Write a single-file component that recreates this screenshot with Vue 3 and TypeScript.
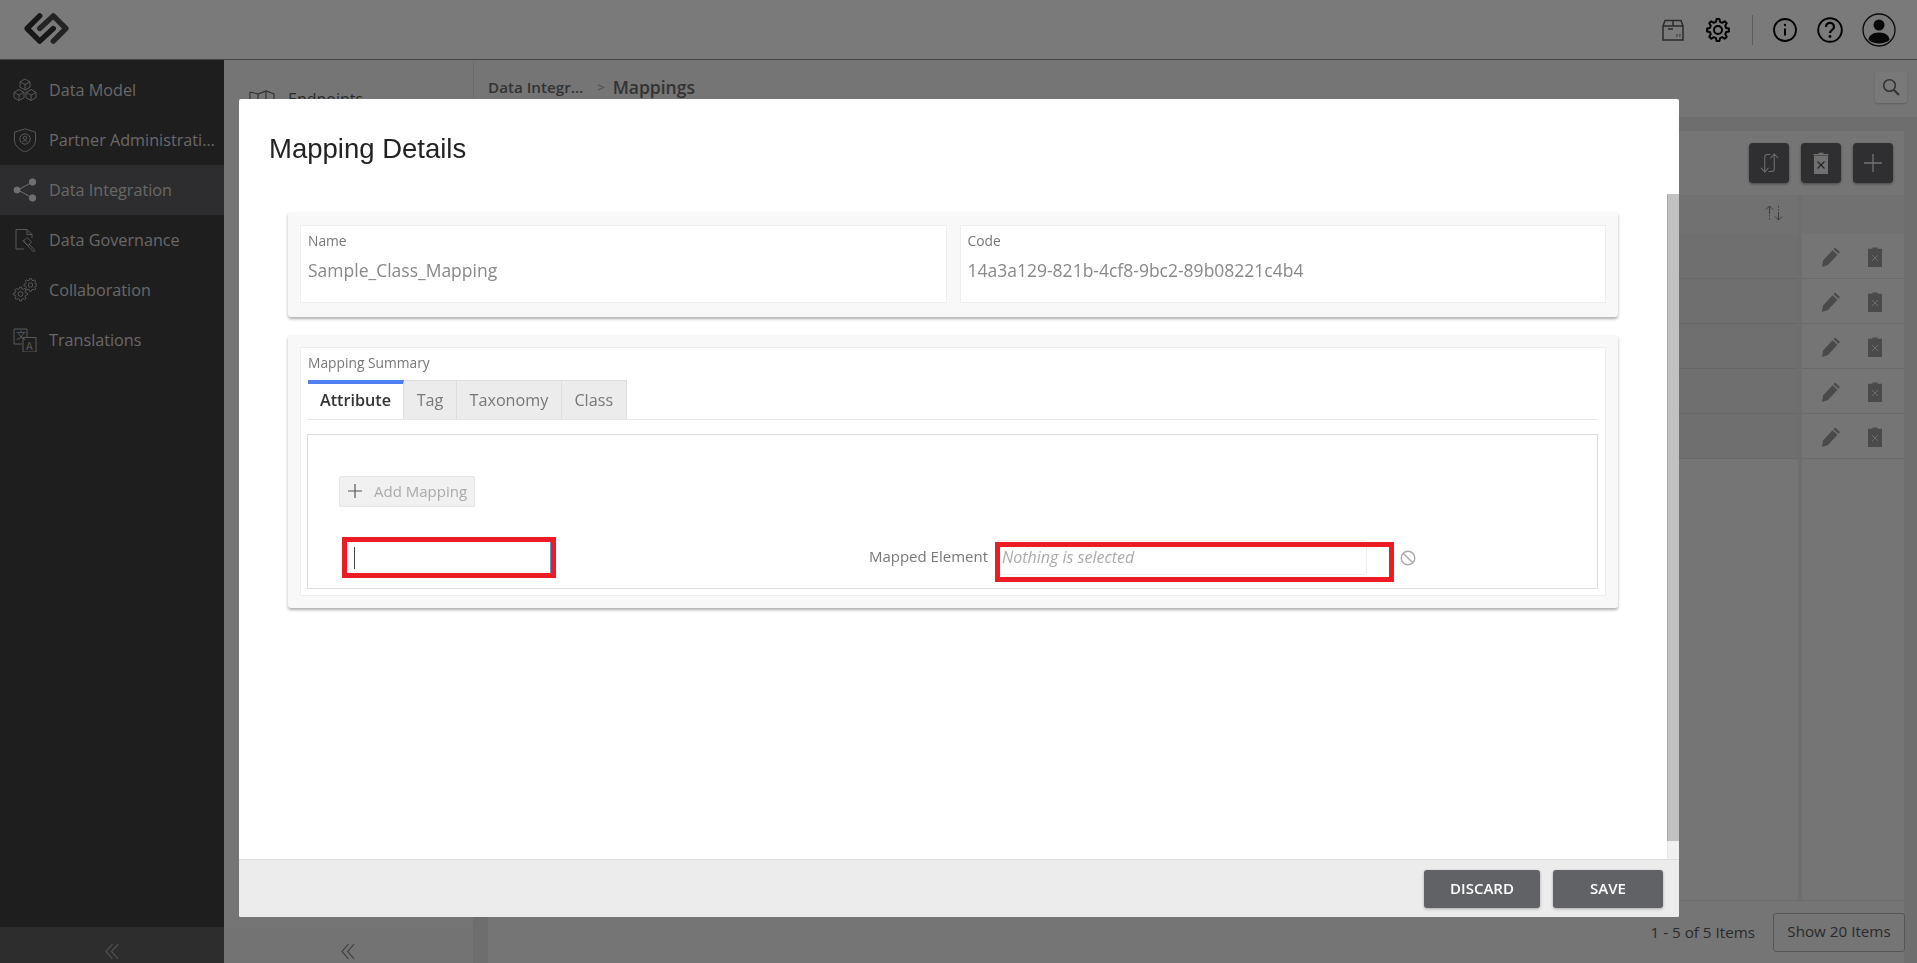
<script setup lang="ts">
import { ref } from 'vue'

// builds a toothed wheel outline for the gear icons
function gear(cx: number, cy: number, r: number, teeth = 8): string {
  const inner = r * 0.76
  const step = (Math.PI * 2) / teeth
  let d = ''
  for (let i = 0; i < teeth; i++) {
    const a = i * step - Math.PI / 2
    const pts: [number, number][] = [
      [inner, a - step * 0.32],
      [r, a - step * 0.17],
      [r, a + step * 0.17],
      [inner, a + step * 0.32],
    ]
    for (const [rad, ang] of pts) {
      d += `${d ? 'L' : 'M'}${(cx + rad * Math.cos(ang)).toFixed(2)} ${(cy + rad * Math.sin(ang)).toFixed(2)}`
    }
  }
  return d + 'Z'
}

function circle(cx: number, cy: number, r: number): string {
  return `M${cx - r} ${cy}a${r} ${r} 0 1 0 ${r * 2} 0a${r} ${r} 0 1 0 ${-r * 2} 0Z`
}

interface NavItem {
  label: string
  active?: boolean
  solid?: boolean
  paths: string[]
  marks?: { x: number; y: number; size: number; t: string }[]
}

const navItems: NavItem[] = [
  {
    label: 'Data Model',
    paths: [
      'M12 1l5 2.8v5.4L12 12 7 9.200V3.800z', 'M7 3.800l5 2.800 5-2.800', 'M12 6.600V12',
      'M6 11.500l5 2.800v5.400L6 22.500 1 19.700v-5.400z', 'M1 14.300l5 2.800 5-2.800', 'M6 17.100v5.400',
      'M18 11.500l5 2.800v5.400l-5 2.800-5-2.800v-5.400z', 'M13 14.300l5 2.800 5-2.800', 'M18 17.100v5.400',
    ],
  },
  {
    label: 'Partner Administration',
    paths: [
      'M12 .8l10.500 3.400v8C22.500 18 17 22 12 24 7 22 1.500 18 1.500 12.200v-8z',
      circle(12, 11, 5.200),
      circle(12, 9.800, 1.700),
      'M9.300 14.200c.5-2 4.900-2 5.400 0',
    ],
  },
  {
    label: 'Data Integration',
    active: true,
    solid: true,
    paths: [circle(4, 12, 3), circle(19.500, 4, 3.200), circle(19.500, 20, 3.200), 'M5 12L19.500 4M5 12l14.500 8'],
  },
  {
    label: 'Data Governance',
    paths: [
      'M11 21H3V1.500h11l5 5V10', 'M14 1.500v5h5',
      'M14 9.500l4.500 4.500-3.500 3.500-4.500-4.500z', 'M16 16l6 6.500-1.500 1.300-6-6.300', 'M9.500 12.500l5.500 5.500',
    ],
  },
  {
    label: 'Collaboration',
    paths: [gear(7.500, 16, 7), circle(7.500, 16, 2.400), gear(17.500, 7, 6.500), circle(17.500, 7, 2.200)],
  },
  {
    label: 'Translations',
    paths: ['M1 11V1h13v8', 'M1 11v5h8', 'M10 9.500h13V24H10z'],
    marks: [
      { x: 3, y: 11, size: 10, t: '文' },
      { x: 13, y: 21.500, size: 11, t: 'A' },
    ],
  },
]

const tabs = ['Attribute', 'Tag', 'Taxonomy', 'Class']
const activeTab = ref('Attribute')
const rows = [1, 2, 3, 4, 5]
const bigGear = gear(12, 12, 11, 8)
</script>

<template>
  <div class="page">
    <header class="topbar">
      <svg class="logo" viewBox="0 0 48 34" width="47" height="33">
        <path d="M17 4L4 17l13 13 14-13" fill="none" stroke="#2e2e2e" stroke-width="5.500" stroke-linejoin="round" stroke-linecap="round" />
        <path d="M17 17L31 4l13 13-13 13" fill="none" stroke="#484848" stroke-width="5.500" stroke-linejoin="round" stroke-linecap="round" />
      </svg>
      <div class="top-icons">
        <svg class="ic-box" viewBox="0 0 22 22" width="22" height="22" fill="none" stroke="#555" stroke-width="1.500">
          <path d="M1 7l2-5.500h16L21 7v14H1z" />
          <path d="M1 7h20M11 1.500V7M6 10h5" />
          <path d="M14 17h1.500M17 17h1.500M15 15v1M18 15v1" stroke-width="1" />
        </svg>
        <svg class="ic-gear" viewBox="0 0 24 24" width="24" height="24" fill="none" stroke="#000" stroke-width="2" stroke-linejoin="round">
          <path :d="bigGear" />
          <circle cx="12" cy="12" r="4" />
        </svg>
        <span class="top-divider"></span>
        <svg class="ic-info" viewBox="0 0 24 24" width="24" height="24" fill="none" stroke="#000" stroke-width="1.800">
          <circle cx="12" cy="12" r="11" />
          <path d="M12 10.500v7" stroke-width="2" />
          <circle cx="12" cy="7" r="1.200" fill="#000" stroke="none" />
        </svg>
        <svg class="ic-help" viewBox="0 0 26 26" width="26" height="26" fill="none" stroke="#000" stroke-width="1.900">
          <circle cx="13" cy="13" r="11.800" />
          <path d="M9 10c0-5.500 8-5.500 8 0 0 3-4 2.800-4 6" stroke-width="2.200" />
          <circle cx="13" cy="19.500" r="1.400" fill="#000" stroke="none" />
        </svg>
        <svg class="ic-user" viewBox="0 0 34 34" width="34" height="34">
          <circle cx="17" cy="17" r="16" fill="none" stroke="#111" stroke-width="1.300" />
          <circle cx="17" cy="12" r="5.500" fill="#111" />
          <path d="M6.500 27c0-4 4-7.500 10.500-7.500S27.500 23 27.500 27c-2.500 2-6.500 3.500-10.500 3.500S9 29 6.500 27z" fill="#111" />
        </svg>
      </div>
    </header>

    <div class="workspace">
      <aside class="sidebar">
        <nav class="side-nav">
          <a v-for="item in navItems" :key="item.label" class="side-item" :class="{ active: item.active }">
            <svg
              class="side-icon"
              viewBox="0 0 24 24"
              width="24"
              height="24"
              :fill="item.solid ? '#dedede' : 'none'"
              :stroke="item.solid ? '#dedede' : '#b0b0b0'"
              stroke-width="1"
            >
              <path v-for="d in item.paths" :key="d" :d="d" />
              <text
                v-for="m in item.marks"
                :key="m.t"
                :x="m.x"
                :y="m.y"
                :font-size="m.size"
                fill="#b0b0b0"
                stroke="none"
                font-family="'Noto Sans CJK SC', 'Open Sans', sans-serif"
              >{{ m.t }}</text>
            </svg>
            <span class="side-label">{{ item.label }}</span>
          </a>
        </nav>
        <div class="side-collapse">
          <svg viewBox="0 0 16 16" width="15" height="17" fill="none" stroke="#aaa" stroke-width="1.100" preserveAspectRatio="none">
            <path d="M8 1L1 8l7 7M14 1L7 8l7 7" />
          </svg>
        </div>
      </aside>

      <aside class="subnav">
        <div class="sub-item">
          <svg viewBox="0 0 26 20" width="26" height="20" fill="none" stroke="#666" stroke-width="1.200">
            <path d="M1 3l8 2 8-3 8 3v15M1 3v15M9 5v14M17 2v15" />
          </svg>
          <span>Endpoints</span>
        </div>
        <div class="sub-collapse">
          <svg viewBox="0 0 16 16" width="15" height="17" fill="none" stroke="#7c7c7c" stroke-width="1.100" preserveAspectRatio="none">
            <path d="M8 1L1 8l7 7M14 1L7 8l7 7" />
          </svg>
        </div>
      </aside>

      <main class="main">
        <div class="crumbs">
          <span class="crumb-parent">Data Integr...</span>
          <span class="crumb-sep">&gt;</span>
          <span class="crumb-current">Mappings</span>
          <button class="search-btn">
            <svg viewBox="0 0 18 18" width="18" height="18" fill="none" stroke="#666" stroke-width="1.600">
              <circle cx="7.500" cy="7.500" r="5.800" />
              <path d="M12 12l5 5" stroke-width="2.200" />
            </svg>
          </button>
        </div>
        <section class="panel">
          <div class="toolbar">
            <button class="tool-btn">
              <svg viewBox="0 0 20 20" width="19" height="20" fill="none" stroke="#e0e0e0" stroke-width="1.100">
                <path d="M5 19V4q0-3 3-3h3M1 15l4 4.500L9 15" />
                <path d="M15 1v15q0 3-3 3H9M11 5l4-4.500L19 5" />
              </svg>
            </button>
            <button class="tool-btn">
              <svg viewBox="0 0 16 22" width="16" height="22">
                <path d="M5.500 2V.8h5V2H15.500v1.500H.5V2zM1 4h14v18H1z" fill="#e0e0e0" />
                <path d="M4.500 9.500l7 7M11.500 9.500l-7 7" stroke="#444" stroke-width="1.100" />
              </svg>
            </button>
            <button class="tool-btn">
              <svg viewBox="0 0 20 20" width="20" height="20" stroke="#e4e4e4" stroke-width="1.300">
                <path d="M10 1v18M1 10h18" />
              </svg>
            </button>
          </div>
          <div class="table">
            <div class="col-main">
              <div class="head-cell">
                <svg viewBox="0 0 18 16" width="18" height="16" fill="none" stroke="#777" stroke-width="1">
                  <path d="M4.500 9V1M1 4.500L4.500 1 8 4.500" />
                  <path d="M4.500 10v5" stroke-dasharray="1.500 1.500" />
                  <path d="M13.500 7v8M10 11.500L13.500 15l3.500-3.500" />
                  <path d="M13.500 1v5" stroke-dasharray="1.500 1.500" />
                </svg>
              </div>
              <div v-for="r in rows" :key="r" class="body-cell"></div>
            </div>
            <div class="col-actions">
              <div class="head-cell"></div>
              <div v-for="r in rows" :key="r" class="action-cell">
                <svg class="pencil" viewBox="0 0 20 22" width="20" height="22" fill="#949494">
                  <path d="M14 1.500l5 4.500-1.500 1.700-5-4.500zM11.500 4.200l5 4.500-9.500 10.300L1 21l1-6.500z" />
                </svg>
                <svg class="bin" viewBox="0 0 14 20" width="14" height="20">
                  <path d="M4.500 1.800V.5h5v1.300H14V20H0V1.800z" fill="#949494" />
                  <path d="M4 8l6 6M10 8l-6 6" stroke="#e0e0e0" stroke-width=".9" />
                </svg>
              </div>
            </div>
          </div>
          <div class="pager">
            <span>1 - 5 of 5 Items</span>
            <button class="page-size">Show 20 Items</button>
          </div>
        </section>
      </main>
    </div>

    <div class="backdrop">
      <div class="modal">
        <h2 class="modal-title">Mapping Details</h2>
        <div class="modal-body">
          <div class="modal-scroll">
            <div class="card card-fields">
              <div class="field">
                <label>Name</label>
                <div class="field-value">Sample_Class_Mapping</div>
              </div>
              <div class="field">
                <label>Code</label>
                <div class="field-value">14a3a129-821b-4cf8-9bc2-89b08221c4b4</div>
              </div>
            </div>

            <div class="card">
              <div class="summary">
                <div class="summary-title">Mapping Summary</div>
                <div class="tabs">
                  <button
                    v-for="tab in tabs"
                    :key="tab"
                    class="tab"
                    :class="{ active: tab === activeTab }"
                    @click="activeTab = tab"
                  >{{ tab }}</button>
                </div>
                <div class="tab-panel">
                  <button class="add-btn">
                    <svg viewBox="0 0 14 14" width="14" height="14" stroke="#555" stroke-width="1.200">
                      <path d="M7 0v14M0 7h14" />
                    </svg>
                    <span>Add Mapping</span>
                  </button>
                  <div class="map-row">
                    <div class="attr-input"><span class="caret"></span></div>
                    <div class="mapped-label">Mapped Element</div>
                    <div class="mapped-select">
                      <span>Nothing is selected</span>
                      <div class="red-mark"></div>
                    </div>
                    <svg class="ban" viewBox="0 0 16 16" width="16" height="16" fill="none" stroke="#aaa" stroke-width="1.400">
                      <circle cx="8" cy="8" r="6.800" />
                      <path d="M3.200 3.200l9.600 9.600" />
                    </svg>
                  </div>
                </div>
              </div>
            </div>
          </div>
          <div class="scrollbar">
            <div class="scroll-thumb"></div>
          </div>
        </div>
        <footer class="modal-footer">
          <button class="btn btn-discard">DISCARD</button>
          <button class="btn btn-save">SAVE</button>
        </footer>
      </div>
    </div>
  </div>
</template>

<style>
html, body {
  margin: 0;
  overflow: hidden;
}
</style>

<style scoped>
.page {
  position: relative;
  height: 100vh;
  display: flex;
  flex-direction: column;
  overflow: hidden;
  font-family: "Open Sans", "Liberation Sans", sans-serif;
}
button {
  font-family: inherit;
  cursor: pointer;
}

/* page under the backdrop */
.topbar {
  height: 59px;
  flex: none;
  display: flex;
  align-items: center;
  justify-content: space-between;
  padding-left: 23px;
  background: #f5f5f5;
  border-bottom: 1px solid #888;
}
.logo {
  display: block;
  margin-top: -3px;
}
.top-icons {
  display: flex;
  align-items: center;
  padding-right: 21px;
}
.ic-box { margin-right: 22px; }
.ic-gear { margin-right: 22px; }
.top-divider {
  width: 1px;
  height: 30px;
  background: #bbb;
  margin-right: 20px;
}
.ic-info { margin-right: 20px; }
.ic-help { margin-right: 19px; }

.workspace {
  flex: 1;
  display: flex;
  min-height: 0;
}
.sidebar {
  width: 224px;
  flex: none;
  display: flex;
  flex-direction: column;
  background: #3c3c3c;
}
.side-nav {
  flex: 1;
  padding-top: 5px;
}
.side-item {
  height: 50px;
  display: flex;
  align-items: center;
  padding-left: 13px;
  color: #d0d0d0;
  font-size: 16.200px;
}
.side-item.active { background: #5a5a5e; }
.side-icon {
  flex: none;
  margin-right: 12px;
}
.side-label {
  width: 167px;
  white-space: nowrap;
  overflow: hidden;
  text-overflow: ellipsis;
}
.side-collapse {
  height: 36px;
  box-sizing: border-box;
  display: flex;
  align-items: flex-start;
  justify-content: center;
  padding: 16px 0 0 0;
  background: #5a5a5a;
}
.subnav {
  width: 249px;
  flex: none;
  display: flex;
  flex-direction: column;
  justify-content: space-between;
  background: #ebebeb;
  border-right: 1px solid #d8d8d8;
}
.sub-item {
  display: flex;
  align-items: center;
  gap: 13px;
  padding: 28px 0 0 25px;
  color: #555;
  font-size: 16px;
}
.sub-collapse {
  height: 36px;
  box-sizing: border-box;
  display: flex;
  align-items: flex-start;
  justify-content: center;
  padding-top: 16px;
  background: #e6e6e6;
}
.main {
  flex: 1;
  min-width: 0;
  display: flex;
  flex-direction: column;
  background: #dcdcdc;
}
.crumbs {
  height: 58px;
  flex: none;
  display: flex;
  align-items: center;
  padding: 0 10px 3px 14px;
  background: #ebebeb;
  border-bottom: 1px solid #ddd;
  box-sizing: border-box;
  color: #666;
}
.crumb-parent {
  font-size: 15.200px;
  font-weight: 600;
}
.crumb-sep {
  margin: 0 8px 0 14px;
  font-size: 13px;
  color: #999;
}
.crumb-current {
  font-size: 17.500px;
  font-weight: 600;
}
.search-btn {
  margin-left: auto;
  width: 32px;
  height: 31px;
  padding: 0;
  display: flex;
  align-items: center;
  justify-content: center;
  background: #f2f2f2;
  border: none;
  border-radius: 3px;
  box-shadow: 0 1px 2px rgba(0, 0, 0, 0.2);
}
.panel {
  flex: 1;
  min-height: 0;
  display: flex;
  flex-direction: column;
  margin: 13px 13px 0 14px;
  background: #ebebeb;
}
.toolbar {
  height: 64px;
  flex: none;
  display: flex;
  justify-content: flex-end;
  align-items: center;
  gap: 12px;
  padding-right: 11px;
}
.tool-btn {
  width: 40px;
  height: 40px;
  padding: 0;
  display: flex;
  align-items: center;
  justify-content: center;
  background: #5e5e62;
  border: none;
  border-radius: 4px;
  box-shadow: 0 1px 3px rgba(0, 0, 0, 0.4);
}
.table {
  flex: 1;
  min-height: 0;
  display: flex;
  gap: 4px;
  background: #dcdcdc;
  border-bottom: 1px solid #d4d4d4;
}
.col-main {
  flex: 1;
  background: #ebebeb;
}
.col-actions {
  width: 102px;
  flex: none;
  background: #ebebeb;
}
.head-cell {
  height: 39px;
  display: flex;
  align-items: center;
  justify-content: flex-end;
  padding: 0 15px 3px 0;
  box-sizing: border-box;
  background: #e2e2e2;
}
.body-cell {
  height: 45px;
  box-sizing: border-box;
  background: #dedede;
  border-bottom: 1px solid #cfcfcf;
}
.action-cell {
  height: 45px;
  box-sizing: border-box;
  display: flex;
  align-items: center;
  gap: 27px;
  padding: 2px 0 0 19px;
  border-bottom: 1px solid #d4d4d4;
}
.pager {
  height: 62px;
  flex: none;
  display: flex;
  align-items: center;
  justify-content: flex-end;
  gap: 18px;
  color: #555;
  font-size: 15.200px;
}
.page-size {
  width: 132px;
  height: 39px;
  margin-right: -1px;
  padding: 0 0 2px;
  background: transparent;
  color: #555;
  font-size: 15.200px;
  border: 1px solid #aaa;
  border-radius: 3px;
}

/* modal */
.backdrop {
  position: fixed;
  inset: 0;
  display: flex;
  align-items: flex-start;
  justify-content: flex-start;
  padding: 99px 0 0 239px;
  background: rgba(0, 0, 0, 0.5);
}
.modal {
  width: 1440px;
  height: 818px;
  display: flex;
  flex-direction: column;
  background: #fff;
  border-radius: 2px;
  overflow: hidden;
}
.modal-title {
  height: 95px;
  flex: none;
  margin: 0;
  padding: 33px 0 0 30px;
  box-sizing: border-box;
  font-family: "Liberation Sans", Arial, sans-serif;
  font-size: 27.500px;
  font-weight: 400;
  line-height: 34px;
  color: #222;
}
.modal-body {
  flex: 1;
  min-height: 0;
  display: flex;
}
.modal-scroll {
  flex: 1;
  min-width: 0;
  padding: 18px 49px 0;
}
.scrollbar {
  width: 11px;
  flex: none;
  background: #f1f1f1;
  border-left: 1px solid #e8e8e8;
}
.scroll-thumb {
  height: 647px;
  margin-left: -1px;
  background: #c1c1c1;
  border-left: 1px solid #a8a8a8;
}
.card {
  padding: 12px;
  margin-bottom: 18px;
  background: #f8f8f8;
  border-radius: 3px;
  box-shadow: 0 2px 3px rgba(0, 0, 0, 0.32);
}
.card-fields {
  display: flex;
  gap: 13px;
  padding: 13px 12px 14px;
}
.field {
  flex: 1;
  height: 78px;
  box-sizing: border-box;
  padding: 5px 7px;
  background: #fff;
  border: 1px solid #eee;
}
.field label {
  display: block;
  font-size: 13.800px;
  line-height: 19px;
  color: #777;
}
.field-value {
  margin-top: 8px;
  font-size: 17.500px;
  line-height: 24px;
  color: #888;
}
.summary {
  height: 249px;
  box-sizing: border-box;
  padding: 5px 7px 0 7px;
  background: #fff;
  border: 1px solid #eee;
}
.summary-title {
  font-size: 13.800px;
  line-height: 19px;
  color: #777;
  margin-bottom: 8px;
}
.tabs {
  display: flex;
  height: 39px;
  border-bottom: 1px solid #e6e6e6;
  margin-right: 1px;
}
.tab {
  min-width: 53px;
  padding: 0 12.500px 1px;
  font-size: 16.200px;
  color: #777;
  background: #ececec;
  border: 1px solid #ddd;
  border-bottom: none;
  border-left: none;
}
.tab.active {
  width: 96px;
  padding: 0 0 4px;
  font-weight: 600;
  color: #333;
  background: #fff;
  border: none;
  border-top: 4px solid #4f7ff0;
  border-right: 1px solid #ddd;
}
.tab-panel {
  height: 155px;
  box-sizing: border-box;
  margin: 14px 0 0 -1px;
  padding: 41px 0 0 31px;
  border: 1px solid #ddd;
}
.add-btn {
  width: 136px;
  height: 31px;
  display: flex;
  align-items: center;
  gap: 12px;
  padding: 0 0 2px 8px;
  font-size: 15px;
  color: #aaa;
  background: #f1f1f1;
  border: 1px solid #e4e4e4;
  border-radius: 2px;
}
.map-row {
  display: flex;
  align-items: flex-start;
  margin-top: 30px;
  margin-left: 3px;
}
.attr-input {
  width: 214px;
  height: 41px;
  flex: none;
  box-sizing: border-box;
  display: flex;
  align-items: center;
  padding-left: 7px;
  background: #fff;
  border: 5px solid #ed1c24;
  box-shadow: inset -1px 0 0 #6f8fd0;
}
.caret {
  width: 1px;
  height: 22px;
  background: #444;
}
.mapped-label {
  width: 432px;
  flex: none;
  margin-top: 9px;
  text-align: right;
  font-size: 15px;
  line-height: 20px;
  color: #777;
}
.mapped-select {
  position: relative;
  width: 371px;
  height: 35px;
  flex: none;
  box-sizing: border-box;
  margin: 3px 0 0 8px;
  padding-left: 5px;
  font-size: 16px;
  font-style: italic;
  line-height: 33px;
  color: #aaa;
  border: 1px solid #eee;
  border-radius: 3px;
}
.red-mark {
  position: absolute;
  top: 1px;
  left: -2px;
  right: -28px;
  bottom: -8px;
  border: 5px solid #ed1c24;
}
.ban {
  margin: 13px 0 0 33px;
}
.modal-footer {
  height: 58px;
  flex: none;
  box-sizing: border-box;
  display: flex;
  align-items: center;
  justify-content: flex-end;
  gap: 13px;
  padding-right: 16px;
  background: #ececec;
  border-top: 1px solid #ddd;
}
.btn {
  height: 38px;
  padding: 0 0 2px;
  font-size: 15px;
  font-weight: 600;
  color: #fff;
  background: #616266;
  border: none;
  border-radius: 3px;
  box-shadow: 0 1px 3px rgba(0, 0, 0, 0.3);
}
.btn-discard { width: 116px; }
.btn-save { width: 110px; }
</style>
